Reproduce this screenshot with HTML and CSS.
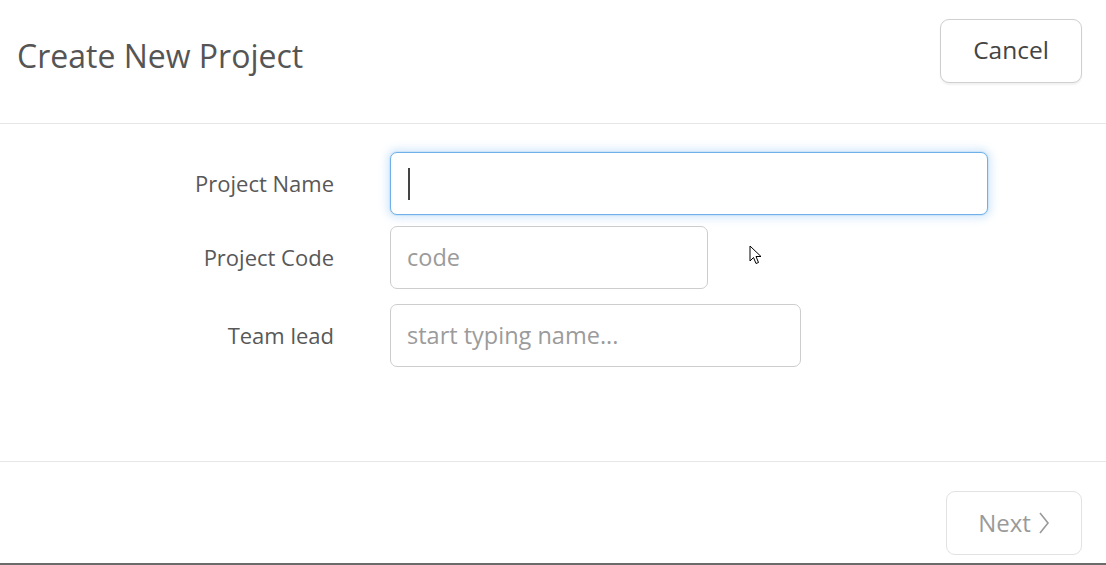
FILE: index.html
```html
<!DOCTYPE html>
<html>
<head>
<meta charset="utf-8">
<link rel="stylesheet" href="styles.css">
</head>
<body>
<div class="page">
  <header class="header">
    <h1 class="title">Create New Project</h1>
    <button class="btn btn-cancel">Cancel</button>
  </header>
  <main class="form">
    <div class="row row-1">
      <label class="label">Project Name</label>
      <div class="input input-name focused"><span class="caret"></span></div>
    </div>
    <div class="row row-2">
      <label class="label">Project Code</label>
      <div class="input input-code"><span class="placeholder">code</span></div>
    </div>
    <div class="row row-3">
      <label class="label">Team lead</label>
      <div class="input input-lead"><span class="placeholder">start typing name...</span></div>
    </div>
  </main>
  <footer class="footer">
    <button class="btn btn-next">Next <svg class="chev" width="12" height="24" viewBox="0 0 12 24"><path d="M2 2 L10 12 L2 22" fill="none" stroke="#9a9a9a" stroke-width="1.6"/></svg></button>
  </footer>
  <svg class="pointer" width="16" height="22" viewBox="0 0 16 22"><path d="M1 1 L1 16 L4.5 12.5 L7 18.5 L9.5 17.5 L7 11.5 L12 11.5 Z" fill="#fff" stroke="#000" stroke-width="1" stroke-linejoin="round"/></svg>
</div>
</body>
</html>
```

FILE: styles.css
```css
* { box-sizing: border-box; }
html, body { margin: 0; padding: 0; }
body {
  width: 1106px;
  height: 565px;
  overflow: hidden;
  background: #fff;
  font-family: "Open Sans", "Lato", sans-serif;
  color: #555;
}
.page {
  position: relative;
  height: 565px;
  display: flex;
  flex-direction: column;
  border-bottom: 2px solid #6b6b6b;
}
.header {
  height: 124px;
  border-bottom: 1px solid #e6e6e6;
  display: flex;
  justify-content: space-between;
  align-items: flex-start;
  padding: 0 24px 0 17px;
}
.title {
  margin: 34px 0 0 0;
  font-size: 32px;
  font-weight: 400;
  color: #555;
  letter-spacing: 0;
}
.btn {
  font-family: inherit;
  background: #fff;
  border-radius: 9px;
  cursor: pointer;
}
.btn-cancel {
  margin-top: 19px;
  width: 142px;
  height: 64px;
  border: 1px solid #cfcfcf;
  box-shadow: 0 2px 2px rgba(0,0,0,0.06);
  font-size: 24.5px;
  color: #444;
  padding-bottom: 4px;
}
.form {
  flex: 1;
  padding-top: 28px;
  display: flex;
  flex-direction: column;
}
.row {
  display: flex;
  align-items: center;
}
.row-2 { margin-top: 11px; }
.row-3 { margin-top: 15px; }
.label {
  width: 334px;
  text-align: right;
  font-size: 22px;
  color: #585858;
  margin-right: 56px;
  padding-bottom: 2px;
}
.input {
  height: 63px;
  border: 1px solid #cdcdcd;
  border-radius: 7px;
  background: #fff;
  display: flex;
  align-items: center;
  padding-left: 16px;
  font-size: 23.5px;
}
.input-name { width: 598px; }
.input-code { width: 318px; }
.input-lead { width: 411px; }
.focused {
  border-color: #6fb0e8;
  box-shadow: 0 0 0 1px rgba(110,176,232,0.15), 0 0 8px 3px rgba(160,205,245,0.45);
}
.caret {
  display: block;
  width: 2px;
  height: 32px;
  margin-left: 1px;
  background: #444;
}
.placeholder { color: #9b9b9b; padding-bottom: 2px; }
.footer {
  height: 102px;
  border-top: 1px solid #e6e6e6;
  background: #fff;
  display: flex;
  justify-content: flex-end;
  align-items: flex-start;
  padding-right: 24px;
}
.btn-next {
  margin-top: 29px;
  width: 136px;
  height: 64px;
  border: 1px solid #e2e2e2;
  color: #9a9a9a;
  font-size: 24px;
  display: flex;
  align-items: center;
  justify-content: center;
  gap: 7px;
  padding-bottom: 2px;
}
.chev { margin-top: 1px; }
.pointer {
  position: absolute;
  left: 749px;
  top: 245px;
}
```
